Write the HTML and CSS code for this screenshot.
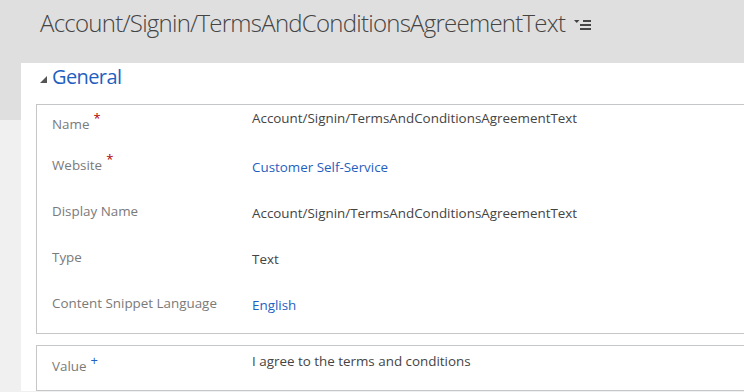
FILE: index.html
```html
<!DOCTYPE html>
<html>
	<head>
		<meta charset="UTF-8">
		<meta name="viewport" content="width=device-width, initial-scale=1.0">
		<title>Content Snippet</title>
		<link rel="stylesheet" href="styles.css">
	</head>

	<body>
		<header>
			<h1>Account/Signin/TermsAndConditionsAgreementText</h1>
			<svg class="menu-icon" width="18" height="12" viewBox="0 0 18 12" xmlns="http://www.w3.org/2000/svg">
				<path d="M0 1h5.5L2.75 4z"></path>
				<rect x="9" y="1" width="8" height="2"></rect>
				<rect x="6" y="5" width="11" height="2"></rect>
				<rect x="6" y="9" width="11" height="2"></rect>
			</svg>
		</header>
		<main>
			<section class="panel">
				<h2>
					<svg class="toggle" width="7" height="7" viewBox="0 0 7 7" xmlns="http://www.w3.org/2000/svg">
						<path d="M7 0v7H0z"></path>
					</svg>
					General
				</h2>
				<div class="box">
					<div class="row first">
						<div class="label">Name<span class="req">*</span></div>
						<div class="value">Account/Signin/TermsAndConditionsAgreementText</div>
					</div>
					<div class="row">
						<div class="label">Website<span class="req">*</span></div>
						<div class="value"><a href="#">Customer Self-Service</a></div>
					</div>
					<div class="row">
						<div class="label">Display Name</div>
						<div class="value">Account/Signin/TermsAndConditionsAgreementText</div>
					</div>
					<div class="row">
						<div class="label">Type</div>
						<div class="value">Text</div>
					</div>
					<div class="row">
						<div class="label">Content Snippet Language</div>
						<div class="value"><a href="#">English</a></div>
					</div>
				</div>
				<div class="box">
					<div class="row value-row">
						<div class="label">Value<span class="rec">+</span></div>
						<div class="value">I agree to the terms and conditions</div>
					</div>
				</div>
			</section>
		</main>
	</body>

</html>
```

FILE: styles.css
```css
* {
	padding: 0;
	margin: 0;
	box-sizing: border-box;
}

body {
	font-family: "Open Sans", "Noto Sans", sans-serif;
	background: #f0f0f0;
	overflow: hidden;
}

header {
	background: #dfdfdf;
	height: 63px;
	padding: 7px 0 0 40px;
	display: flex;
	align-items: flex-start;
}

header h1 {
	font-weight: 300;
	font-size: 24px;
	line-height: 32px;
	letter-spacing: -0.75px;
	color: #444;
}

.menu-icon {
	fill: #444;
	margin: 12px 0 0 9px;
}

main {
	background: linear-gradient(#dfdfdf 57px, #f0f0f0 57px);
	padding-left: 21px;
}

.panel {
	background: #fff;
	padding-left: 15px;
}

.panel h2 {
	font-weight: 400;
	font-size: 20px;
	line-height: 28px;
	letter-spacing: -0.6px;
	height: 41px;
	color: #1f5fbf;
	display: flex;
	align-items: flex-start;
}

.toggle {
	fill: #555;
	margin: 13px 5px 0 4px;
}

.box {
	border: 1px solid #c4c6c8;
	border-right: none;
	margin-bottom: 11px;
}

.box:last-child {
	margin-bottom: 0;
}

.row {
	display: flex;
	height: 46px;
	font-size: 13.4px;
	line-height: 18px;
}

.row:last-child {
	height: 44px;
}

.label {
	width: 215px;
	padding: 5px 0 0 15px;
	color: #7a7a7a;
}

.value {
	padding-top: 7px;
	color: #444;
}

.row.first .label {
	padding-top: 10px;
}

.row.first .value {
	padding-top: 4px;
}

.value-row .label {
	padding-top: 11px;
}

.value-row .value {
	padding-top: 6px;
}

.req,
.rec {
	font-size: 13px;
	vertical-align: 6px;
	line-height: 0;
	margin-left: 4px;
}

.req {
	color: #b00000;
}

.rec {
	color: #2060c0;
}

a {
	color: #1f5fbf;
	text-decoration: none;
}
```
